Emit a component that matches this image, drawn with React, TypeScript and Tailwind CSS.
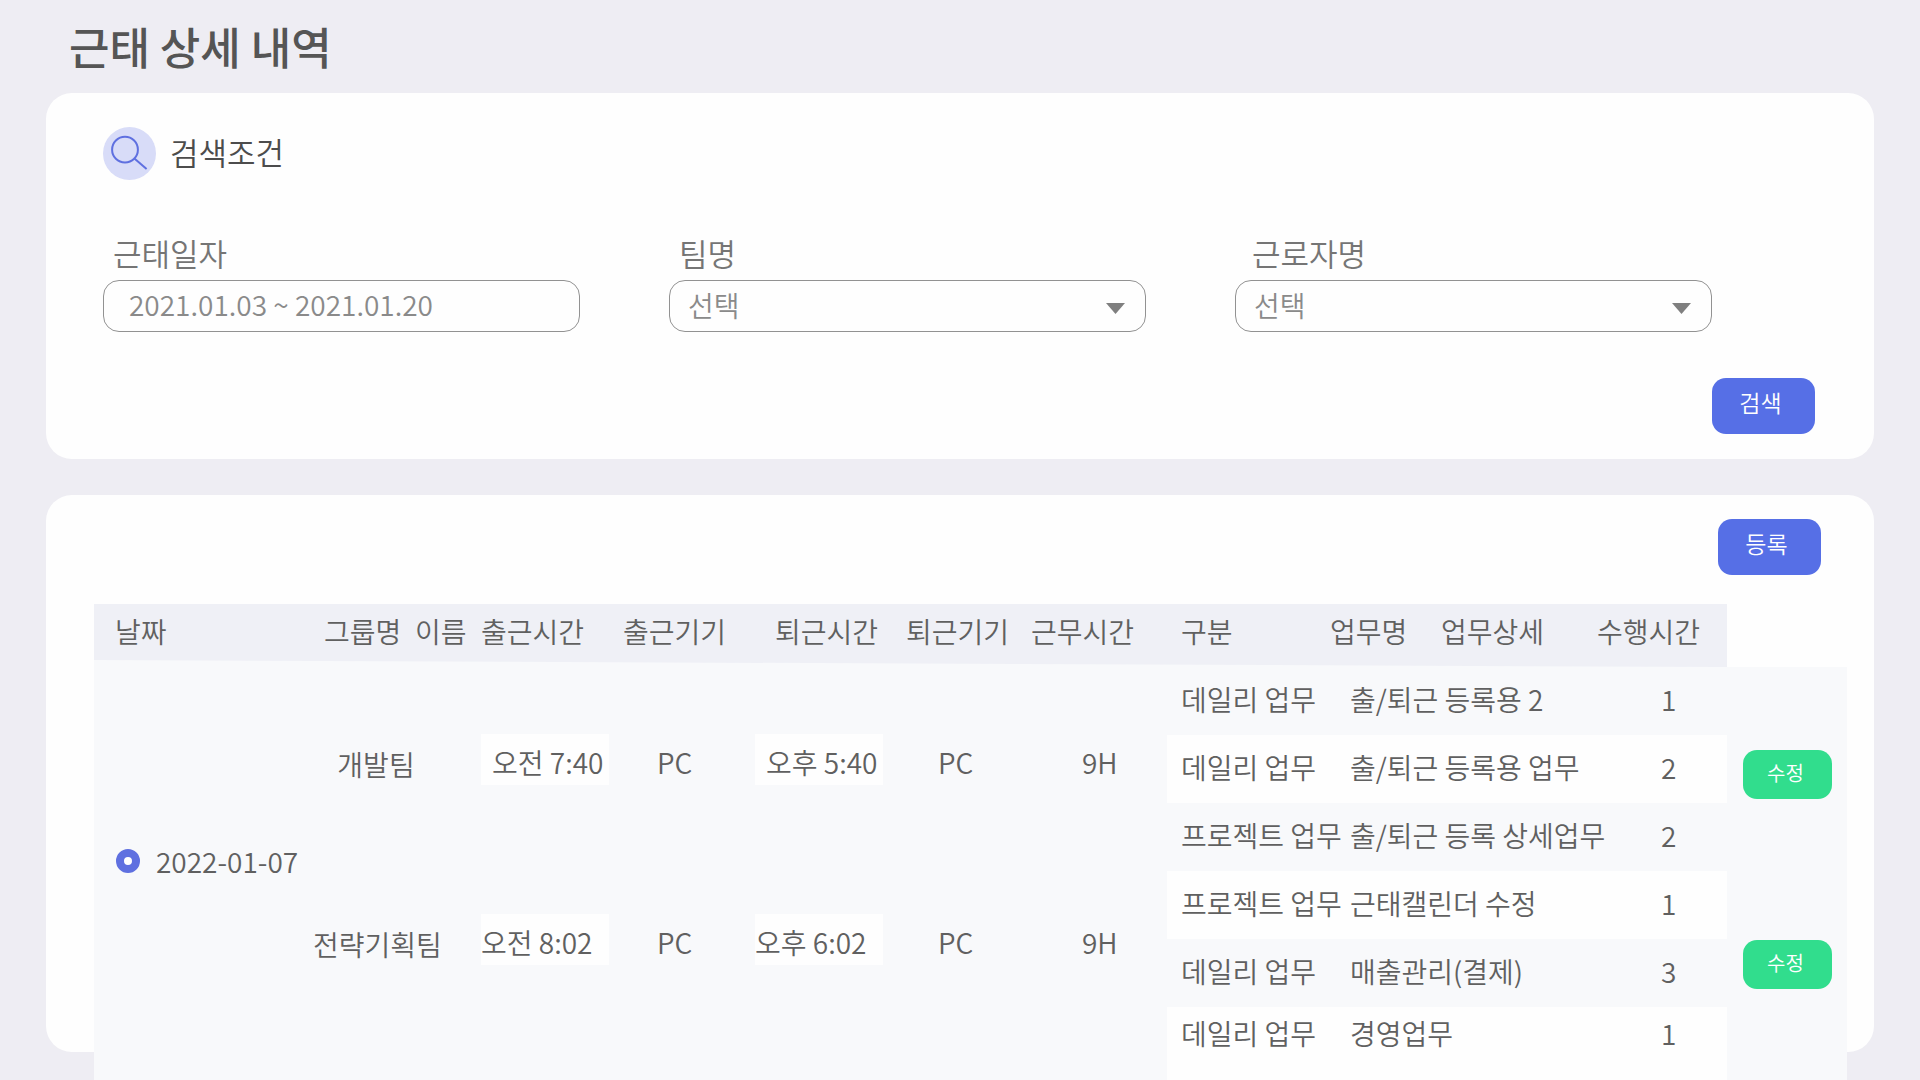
import { useState } from 'react';

const headers = [
    { label: '날짜', col: 'w-[219px]', cell: 'pl-[21px]' },
    { label: '그룹명', col: 'w-[102px]', cell: 'pl-[11px]' },
    { label: '이름', col: 'w-[66px]', cell: '' },
    { label: '출근시간', col: 'w-[142px]', cell: '' },
    { label: '출근기기', col: 'w-[132px]', cell: '' },
    { label: '퇴근시간', col: 'w-[151px]', cell: 'pl-5' },
    { label: '퇴근기기', col: 'w-[125px]', cell: '' },
    { label: '근무시간', col: 'w-[136px]', cell: '' },
    { label: '구분', col: 'w-[163px]', cell: 'pl-[14px]' },
    { label: '업무명', col: 'w-[111px]', cell: '' },
    { label: '업무상세', col: 'w-[156px]', cell: '' },
    { label: '수행시간', col: 'w-[130px]', cell: '' },
];

const groups = [
    {
        team: '개발팀', start: '오전 7:40', end: '오후 5:40', device: 'PC', hours: '9H',
        cell: 'pt-[67px]', time: 'pl-[11px]', edit: 'pt-[83px]',
        tasks: [
            { kind: '데일리 업무', detail: '출/퇴근 등록용 2', time: 1 },
            { kind: '데일리 업무', detail: '출/퇴근 등록용 업무', time: 2 },
            { kind: '프로젝트 업무', detail: '출/퇴근 등록 상세업무', time: 2 },
        ],
    },
    {
        team: '전략기획팀', start: '오전 8:02', end: '오후 6:02', device: 'PC', hours: '9H',
        cell: 'pt-[43px]', time: '', edit: 'pt-[69px]',
        tasks: [
            { kind: '프로젝트 업무', detail: '근태캘린더 수정', time: 1 },
            { kind: '데일리 업무', detail: '매출관리(결제)', time: 3 },
            { kind: '데일리 업무', detail: '경영업무', time: 1 },
        ],
    },
];

const fieldClass = 'w-full h-[52px] rounded-2xl border border-[#929292] bg-transparent text-[28px] text-[#8a8a8a] outline-none';
const blueButton = 'w-[103px] h-14 pb-[7px] pr-[6px] rounded-[14px] bg-[#566fe6] text-[23px] text-white';

const SearchIcon = () => (
    <svg width="53" height="53" viewBox="0 0 53 53" fill="none" aria-hidden="true">
        <circle cx="26.5" cy="26.5" r="26.5" fill="#d8dcf8" />
        <circle cx="22" cy="22.7" r="12.9" stroke="#5f70e0" strokeWidth="2" />
        <path d="M31.4 31.5L43.6 41.9" stroke="#5f70e0" strokeWidth="2" />
    </svg>
);

const SelectField = ({ id, label, labelClass }: { id: string; label: string; labelClass: string }) => (
    <div>
        <label htmlFor={id} className={`block h-[46px] text-[31px] leading-[38px] text-[#757575] ${labelClass}`}>{label}</label>
        <div className="relative">
            <select id={id} className={`${fieldClass} appearance-none pl-[18px] pb-[2px]`}>
                <option>선택</option>
            </select>
            <svg className="absolute right-[21px] top-[23px] pointer-events-none" width="19" height="11" viewBox="0 0 19 11" aria-hidden="true">
                <path d="M0 0H19L9.5 11Z" fill="#7f7f7f" />
            </svg>
        </div>
    </div>
);

const App = () => {
    const [period, setPeriod] = useState('2021.01.03 ~ 2021.01.20');
    const [checked, setChecked] = useState(true);

    return (
        <main className="h-screen overflow-hidden flex flex-col px-[46px] pb-7 bg-[#eeedf3] font-[350] font-['Noto_Sans_CJK_KR',sans-serif]">
            <h1 className="h-[93px] shrink-0 pl-[23px] pt-[14px] text-[44px] leading-[64px] font-medium text-[#555555]">근태 상세 내역</h1>

            <section className="shrink-0 h-[366px] rounded-[26px] bg-[#fefefe] pl-[57px] pt-[34px]">
                <div className="flex items-center gap-[14px]">
                    <SearchIcon />
                    <h2 className="pb-1 text-[31px] leading-[46px] text-[#4c4c4c]">검색조건</h2>
                </div>
                <div className="grid grid-cols-3 gap-[89px] mt-[54px] mr-[162px]">
                    <div>
                        <label htmlFor="period" className="block h-[46px] pl-[10px] text-[31px] leading-[38px] text-[#757575]">근태일자</label>
                        <input id="period" value={period} onChange={e => setPeriod(e.target.value)} className={`${fieldClass} pl-[25px] pb-1`} />
                    </div>
                    <SelectField id="team" label="팀명" labelClass="pl-[10px]" />
                    <SelectField id="worker" label="근로자명" labelClass="pl-[17px]" />
                </div>
                <div className="flex justify-end mt-[46px] mr-[59px]">
                    <button className={blueButton}>검색</button>
                </div>
            </section>

            <section className="flex-1 min-h-0 mt-9 rounded-[26px] bg-[#fefefe] pl-12 pr-[27px] pt-6">
                <div className="flex justify-end mr-[26px]">
                    <button className={blueButton}>등록</button>
                </div>
                <table className="w-full mt-[29px] table-fixed bg-[#f8f9fb] text-[28px] leading-10 text-[#606060] text-left whitespace-nowrap">
                    <colgroup>
                        {headers.map(h => <col key={h.label} className={h.col} />)}
                        <col className="w-[120px]" />
                    </colgroup>
                    {/* 헤더 아래쪽 경계가 오른쪽으로 갈수록 내려간다 */}
                    <thead className="[clip-path:polygon(0_0,100%_0,100%_100%,93%_100%,0_56px)]">
                        <tr className="h-[63px]">
                            {headers.map(h => (
                                <th key={h.label} className={`bg-[#eff0f6] p-0 pb-[10px] font-[350] ${h.cell}`}>{h.label}</th>
                            ))}
                            <td className="bg-[#fefefe]" />
                        </tr>
                    </thead>
                    <tbody>
                        {groups.map((g, gi) => g.tasks.map((t, ti) => {
                            const first = ti === 0;
                            const n = gi * 3 + ti;
                            const last = n === 5;
                            const stripe = `${n % 2 === 1 ? 'bg-[#fefefe]' : ''} ${last ? 'align-top pt-[6px]' : 'pb-[5px]'}`;
                            return (
                                <tr key={n} className={last ? 'h-[120px]' : 'h-[68px]'}>
                                    {n === 0 && (
                                        <td rowSpan={6} className="align-top pl-[22px] pt-[174px]">
                                            <label className="flex items-center gap-4">
                                                <input type="radio" name="date" checked={checked} onChange={() => setChecked(true)} className="appearance-none size-6 rounded-full border-8 border-[#5f70e0] bg-white" />
                                                2022-01-07
                                            </label>
                                        </td>
                                    )}
                                    {first && (
                                        <>
                                            <td rowSpan={3} colSpan={2} className={`align-top text-center pr-[42px] ${g.cell}`}><div className="leading-[60px]">{g.team}</div></td>
                                            <td rowSpan={3} className={`align-top ${g.cell}`}><div className={`w-32 h-[51px] bg-[#fefefe] leading-[56px] ${g.time}`}>{g.start}</div></td>
                                            <td rowSpan={3} className={`align-top pl-[34px] leading-[56px] ${g.cell}`}>{g.device}</td>
                                            <td rowSpan={3} className={`align-top ${g.cell}`}><div className={`w-32 h-[51px] bg-[#fefefe] leading-[56px] ${g.time}`}>{g.end}</div></td>
                                            <td rowSpan={3} className={`align-top pl-8 leading-[56px] ${g.cell}`}>{g.device}</td>
                                            <td rowSpan={3} className={`align-top pl-[51px] leading-[56px] ${g.cell}`}>{g.hours}</td>
                                        </>
                                    )}
                                    <td className={`pl-[14px] ${stripe}`}>{t.kind}</td>
                                    <td colSpan={2} className={`pl-5 ${stripe}`}>{t.detail}</td>
                                    <td className={`pl-16 ${stripe}`}>{t.time}</td>
                                    {first && (
                                        <td rowSpan={3} className={`align-top pl-4 ${g.edit}`}>
                                            <button className="block w-[89px] h-[49px] pb-1 pr-1 rounded-[14px] bg-[#31dd8d] text-[20px] leading-7 text-white">수정</button>
                                        </td>
                                    )}
                                </tr>
                            );
                        }))}
                    </tbody>
                </table>
            </section>
        </main>
    );
};

export default App;
